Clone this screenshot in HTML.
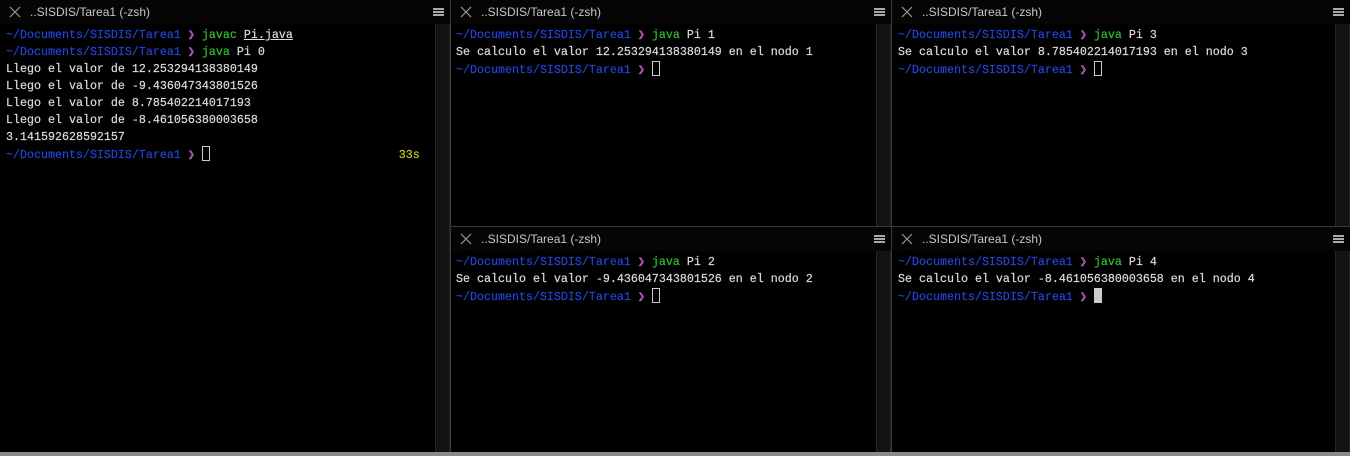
<!DOCTYPE html>
<html><head><style>
*{margin:0;padding:0;box-sizing:border-box}
body{width:1350px;height:456px;background:#000;position:relative;overflow:hidden}
.pane{position:absolute;background:#000}
.tb{position:absolute;left:0;right:0;top:0;height:24px;background:#050505;font:12px "Liberation Sans",sans-serif;color:#c8c8c8}
.tb .t{position:absolute;left:30px;top:5px}
.tb svg.x{position:absolute;left:9px;top:6px}
.tb .m{position:absolute;right:6px;top:8px;width:11px;height:8px;border-top:2px solid #aaa;border-bottom:2px solid #aaa}
.tb .m:after{content:"";position:absolute;left:0;right:0;top:1px;height:2px;background:#aaa}
.sb{position:absolute;right:0;top:24px;bottom:0;width:15px;background:#121212;border-left:1px solid #262626;border-right:1px solid #262626}
.body{position:absolute;left:6px;top:27px;font:11.67px/17px "Liberation Mono",monospace;color:#dcdcdc;white-space:pre;-webkit-text-stroke:0.2px #dcdcdc}
.b{color:#2444d8;-webkit-text-stroke:0.2px #2444d8}.p{color:#c030c0}.g{color:#30c030;-webkit-text-stroke:0.2px #30c030}.y{color:#c8c820;-webkit-text-stroke:0.2px #c8c820}
.cur{display:inline-block;width:8px;height:15px;border:1px solid #ccc;vertical-align:-3px}
.curf{display:inline-block;width:8px;height:15px;background:#ccc;vertical-align:-3px}
.u{text-decoration:underline}
.vl{position:absolute;width:1px;background:#3a3a3a}
.hl{position:absolute;height:1px;background:#3a3a3a}
</style></head><body>
<div class="pane" style="left:0;top:0;width:450px;height:452px">
<div class="tb"><svg class="x" width="12" height="12"><path d="M1 1L11 11M11 1L1 11" stroke="#999" stroke-width="1.2"/></svg><span class="t">..SISDIS/Tarea1 (-zsh)</span><div class="m"></div></div>
<div class="sb"></div>
<div class="body"><span class="b">~/Documents/SISDIS/Tarea1</span> <span class="p">❯</span> <span class="g">javac</span> <span class="u">Pi.java</span>
<span class="b">~/Documents/SISDIS/Tarea1</span> <span class="p">❯</span> <span class="g">java</span> Pi 0
Llego el valor de 12.253294138380149
Llego el valor de -9.436047343801526
Llego el valor de 8.785402214017193
Llego el valor de -8.461056380003658
3.141592628592157
<span class="b">~/Documents/SISDIS/Tarea1</span> <span class="p">❯</span> <span class="cur"></span>                           <span class="y">33s</span></div>
</div>
<div class="vl" style="left:450px;top:0;height:452px"></div>
<div class="pane" style="left:451px;top:0;width:440px;height:226px">
<div class="tb"><svg class="x" width="12" height="12"><path d="M1 1L11 11M11 1L1 11" stroke="#999" stroke-width="1.2"/></svg><span class="t">..SISDIS/Tarea1 (-zsh)</span><div class="m"></div></div>
<div class="sb"></div>
<div class="body" style="left:5px"><span class="b">~/Documents/SISDIS/Tarea1</span> <span class="p">❯</span> <span class="g">java</span> Pi 1
Se calculo el valor 12.253294138380149 en el nodo 1
<span class="b">~/Documents/SISDIS/Tarea1</span> <span class="p">❯</span> <span class="cur"></span></div>
</div>
<div class="pane" style="left:451px;top:227px;width:440px;height:225px">
<div class="tb"><svg class="x" width="12" height="12"><path d="M1 1L11 11M11 1L1 11" stroke="#999" stroke-width="1.2"/></svg><span class="t">..SISDIS/Tarea1 (-zsh)</span><div class="m"></div></div>
<div class="sb"></div>
<div class="body" style="left:5px"><span class="b">~/Documents/SISDIS/Tarea1</span> <span class="p">❯</span> <span class="g">java</span> Pi 2
Se calculo el valor -9.436047343801526 en el nodo 2
<span class="b">~/Documents/SISDIS/Tarea1</span> <span class="p">❯</span> <span class="cur"></span></div>
</div>
<div class="vl" style="left:891px;top:0;height:452px"></div>
<div class="pane" style="left:892px;top:0;width:458px;height:226px">
<div class="tb"><svg class="x" width="12" height="12"><path d="M1 1L11 11M11 1L1 11" stroke="#999" stroke-width="1.2"/></svg><span class="t">..SISDIS/Tarea1 (-zsh)</span><div class="m"></div></div>
<div class="sb"></div>
<div class="body" style="left:6px"><span class="b">~/Documents/SISDIS/Tarea1</span> <span class="p">❯</span> <span class="g">java</span> Pi 3
Se calculo el valor 8.785402214017193 en el nodo 3
<span class="b">~/Documents/SISDIS/Tarea1</span> <span class="p">❯</span> <span class="cur"></span></div>
</div>
<div class="pane" style="left:892px;top:227px;width:458px;height:225px">
<div class="tb"><svg class="x" width="12" height="12"><path d="M1 1L11 11M11 1L1 11" stroke="#999" stroke-width="1.2"/></svg><span class="t">..SISDIS/Tarea1 (-zsh)</span><div class="m"></div></div>
<div class="sb"></div>
<div class="body" style="left:6px"><span class="b">~/Documents/SISDIS/Tarea1</span> <span class="p">❯</span> <span class="g">java</span> Pi 4
Se calculo el valor -8.461056380003658 en el nodo 4
<span class="b">~/Documents/SISDIS/Tarea1</span> <span class="p">❯</span> <span class="curf"></span></div>
</div>
<div class="hl" style="left:451px;top:226px;width:899px"></div>
<div style="position:absolute;left:0;top:452px;width:1350px;height:4px;background:#8a8a8a"></div>
</body></html>
